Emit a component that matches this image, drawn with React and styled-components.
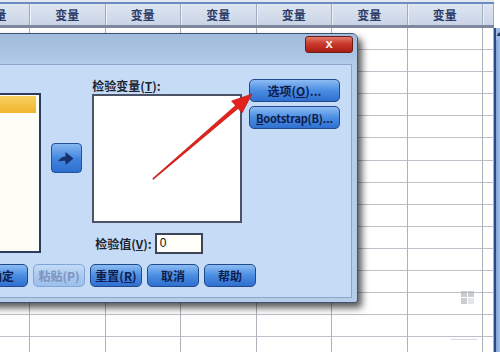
import React from 'react';
import styled, { createGlobalStyle } from 'styled-components';

const GlobalStyle = createGlobalStyle`
  html, body {
    margin: 0;
    padding: 0;
    width: 500px;
    height: 352px;
    overflow: hidden;
    background: #ffffff;
    font-family: "Noto Sans CJK SC", "Liberation Sans", sans-serif;
  }
`;

const COLS = 8;
const ROWS = 15;

const App = () => {
  return (
    <>
      <GlobalStyle />
      <Screen>
        <Sheet>
          <Header>
            {Array.from({ length: COLS }).map((_, i) => (
              <HeadCell key={i}>{i < COLS - 1 ? '变量' : ''}</HeadCell>
            ))}
          </Header>
          {Array.from({ length: ROWS }).map((_, r) => (
            <Row key={r}>
              {Array.from({ length: COLS }).map((_, c) => (
                <Cell key={c} />
              ))}
            </Row>
          ))}
        </Sheet>
        <ScrollBar>
          <ScrollUp>▲</ScrollUp>
        </ScrollBar>

        <Dialog>
          <TitleBar>
            <CloseButton>x</CloseButton>
          </TitleBar>
          <Panel>
            <TopSection>
              <SourceList>
                <SelectedItem />
              </SourceList>
              <ArrowButton>
                <svg width="20" height="18" viewBox="0 0 20 18">
                  <path
                    d="M2 12.5 Q5 7.5 9.5 7.5 L9.5 3 L17.5 9.5 L9.5 16 L9.5 11.8 Q5.5 11.3 2 12.5 Z"
                    fill="#17316e"
                  />
                </svg>
              </ArrowButton>
              <MidColumn>
                <Label>检验变量(<u>T</u>):</Label>
                <TargetList />
                <ValueRow>
                  <Label>检验值(<u>V</u>):</Label>
                  <ValueInput>0</ValueInput>
                </ValueRow>
              </MidColumn>
              <SideColumn>
                <DialogButton $width={91}>选项(<u>O</u>)...</DialogButton>
                <DialogButton $width={91} $small>
                  <u>B</u>ootstrap(B)...
                </DialogButton>
              </SideColumn>
            </TopSection>
            <ButtonRow>
              <DialogButton $width={52}>确定</DialogButton>
              <DialogButton $width={52} $disabled>粘贴(P)</DialogButton>
              <DialogButton $width={52}>重置(<u>R</u>)</DialogButton>
              <DialogButton $width={52}>取消</DialogButton>
              <DialogButton $width={52}>帮助</DialogButton>
            </ButtonRow>
          </Panel>
        </Dialog>

        <Overlay width="500" height="352" viewBox="0 0 500 352">
          <polygon
            points="152.7,178.6 235.5,105.5 231.5,101 252,94 242,113 238.1,108.5 153.3,179.4"
            fill="#e3221b"
            stroke="#b51410"
            strokeWidth="0.6"
            strokeLinejoin="round"
          />
          <g fill="#b4b8bd" opacity="0.7">
            <rect x="461" y="291" width="6" height="6" />
            <rect x="468" y="291" width="6" height="6" />
            <rect x="461" y="298" width="6" height="6" />
            <rect x="468" y="298" width="6" height="6" opacity="0.5" />
          </g>
          <rect x="450" y="339" width="28" height="1" fill="#dcdee2" />
        </Overlay>
      </Screen>
    </>
  );
};

const Screen = styled.div`
  position: relative;
  width: 500px;
  height: 352px;
  overflow: hidden;
  display: flex;
`;

const Sheet = styled.div`
  width: 534px;
  margin-left: -40px;
  flex-shrink: 0;
`;

const GRID = `70px repeat(6, 75.5px) 1fr`;

const Header = styled.div`
  display: grid;
  grid-template-columns: ${GRID};
  height: 28px;
  box-sizing: border-box;
  border-top: 2px solid #e4e9f1;
  border-bottom: 3px solid #7d889c;
  background: #6b8cc0;
  padding-top: 2px;
`;

const HeadCell = styled.div`
  display: flex;
  align-items: center;
  justify-content: center;
  background: linear-gradient(#dfe6f1, #c9d4e6);
  border-right: 1px solid #9eabc0;
  box-shadow: inset 1px 0 0 #eef2f8;
  color: #2b3b68;
  font-size: 12px;
  font-weight: bold;
`;

const Row = styled.div`
  display: grid;
  grid-template-columns: ${GRID};
  height: 22.1px;
`;

const Cell = styled.div`
  box-sizing: border-box;
  border-right: 1px solid #aeb3bb;
  border-bottom: 1px solid #bcc0c8;
  background: #ffffff;
`;

const ScrollBar = styled.div`
  width: 6px;
  margin-top: 28px;
  flex-shrink: 0;
  border-left: 2px solid #2a4a86;
  background: linear-gradient(90deg, #7fa3d8, #b9d0ee);
`;

const ScrollUp = styled.div`
  height: 12px;
  font-size: 5px;
  color: #1d3a72;
  line-height: 12px;
  text-align: center;
  background: #9dbbe6;
`;

const Dialog = styled.div`
  position: absolute;
  left: -40px;
  top: 33px;
  width: 398px;
  height: 270px;
  box-sizing: border-box;
  border: 1px solid #3e5276;
  border-radius: 6px 6px 3px 3px;
  background: #b6cdea;
  box-shadow: 4px 5px 7px rgba(0, 0, 0, 0.65);
  display: flex;
  flex-direction: column;
`;

const TitleBar = styled.div`
  height: 30px;
  flex-shrink: 0;
  display: flex;
  justify-content: flex-end;
  align-items: flex-start;
  padding-right: 4px;
  border-radius: 5px 5px 0 0;
  background: linear-gradient(#a3bbdb, #aac3e3 60%, #b4cbe9);
`;

const CloseButton = styled.div`
  width: 48px;
  height: 17px;
  margin-top: 2px;
  box-sizing: border-box;
  border: 1px solid #6b1c16;
  border-radius: 3px;
  background: linear-gradient(#e27a6c, #c93a2c 45%, #a91d12);
  color: #f4f0f0;
  font-family: "Liberation Sans", sans-serif;
  font-weight: bold;
  font-size: 13px;
  line-height: 13px;
  text-align: center;
`;

const Panel = styled.div`
  flex: 1;
  margin: 0 5px 6px 5px;
  box-sizing: border-box;
  border: 1px solid #8ba6ca;
  background: #c5dbf6;
  padding: 0 11px 10px 9px;
  display: flex;
  flex-direction: column;
`;

const TopSection = styled.div`
  display: flex;
  align-items: flex-start;
`;

const SourceList = styled.div`
  width: 65px;
  height: 160px;
  margin-top: 28px;
  box-sizing: border-box;
  border: 2px solid #2c3a5e;
  background: #fffef6;
  padding: 1px 3px 0 0;
`;

const SelectedItem = styled.div`
  height: 17px;
  background: linear-gradient(#f9d060, #f0b52c);
`;

const ArrowButton = styled.div`
  width: 32px;
  height: 30px;
  margin: 78px 0 0 10px;
  box-sizing: border-box;
  border: 1px solid #23509a;
  border-radius: 4px;
  background: linear-gradient(#86b7f2, #3f83de 55%, #2e6fce);
  display: flex;
  align-items: center;
  justify-content: center;
`;

const MidColumn = styled.div`
  width: 151px;
  margin: 14px 0 0 10px;
  display: flex;
  flex-direction: column;
`;

const Label = styled.div`
  font-size: 12px;
  font-weight: bold;
  line-height: 14px;
  color: #1e2530;
  white-space: nowrap;
`;

const TargetList = styled.div`
  height: 129px;
  margin-top: 1px;
  box-sizing: border-box;
  border: 2px solid #4a5466;
  background: #ffffff;
`;

const ValueRow = styled.div`
  display: flex;
  align-items: center;
  gap: 3px;
  height: 21px;
  margin-top: 10px;
  padding-left: 3px;
`;

const ValueInput = styled.div`
  width: 48px;
  height: 21px;
  box-sizing: border-box;
  border: 2px solid #3c4456;
  background: #fffef8;
  padding-left: 3px;
  font-family: "Liberation Sans", sans-serif;
  font-size: 12px;
  line-height: 17px;
  color: #111;
`;

const SideColumn = styled.div`
  margin: 14px 0 0 7px;
  display: flex;
  flex-direction: column;
  gap: 4px;
`;

const DialogButton = styled.div`
  width: ${(p) => p.$width}px;
  height: 23px;
  box-sizing: border-box;
  border: 1px solid ${(p) => (p.$disabled ? '#7fa5da' : '#21498e')};
  border-radius: 5px;
  background: ${(p) =>
    p.$disabled
      ? 'linear-gradient(#c4dbf6, #a9c8ef 55%, #9dbfec)'
      : 'linear-gradient(#8cbcf3, #4b8de2 50%, #2f70d0)'};
  color: ${(p) => (p.$disabled ? '#7b94be' : '#0f1d4c')};
  font-size: ${(p) => (p.$small ? 11 : 12)}px;
  font-weight: bold;
  display: flex;
  align-items: center;
  justify-content: center;
  white-space: nowrap;
  letter-spacing: ${(p) => (p.$small ? '-0.2px' : '0')};
`;

const ButtonRow = styled.div`
  display: flex;
  gap: 5px;
  margin-top: 10px;
`;

const Overlay = styled.svg`
  position: absolute;
  left: 0;
  top: 0;
  pointer-events: none;
`;

export default App;
